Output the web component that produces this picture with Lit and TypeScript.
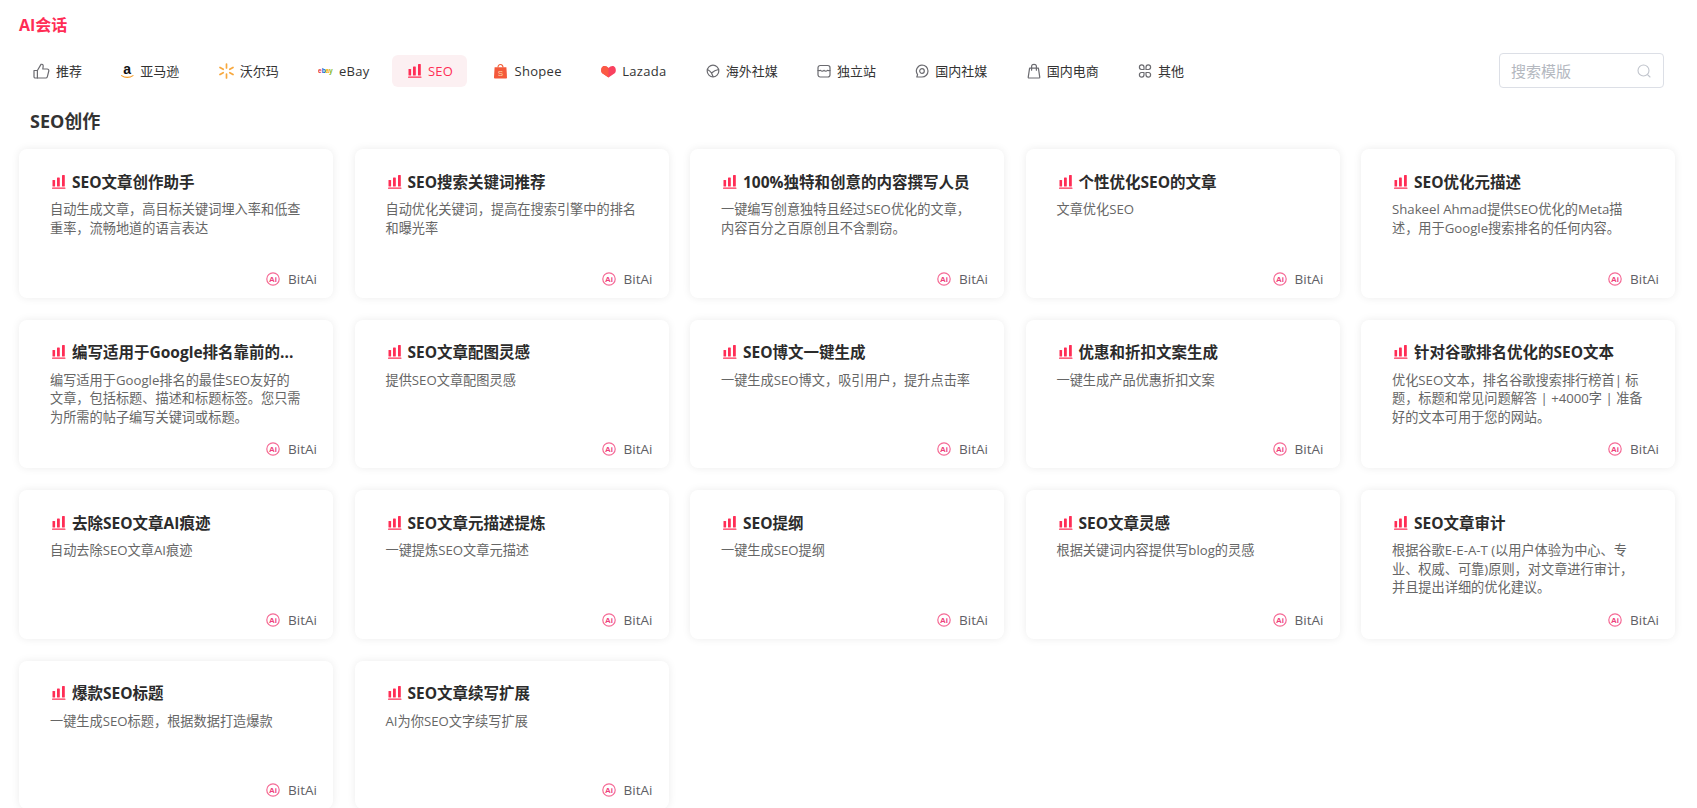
import { LitElement, html, css, svg } from "lit";
import { customElement } from "lit/decorators.js";

const stroke = (w: number, h: number, body: unknown) => html`<svg class="ic" width=${w} height="16" viewBox="0 0 ${w} 16" fill="none" stroke="#6b6b70" stroke-width="1.2" stroke-linecap="round" stroke-linejoin="round">${body}</svg>`;

const bars = (w = 14) => html`<svg class="ic" width=${w} height="15" viewBox="0 0 14 15" fill="#ff2d55">
  <rect x="0.5" y="6" width="2.6" height="6.5" rx="0.6"/><rect x="5" y="3.5" width="2.8" height="9" rx="0.6"/><rect x="10" y="1" width="2.8" height="11.5" rx="0.6"/><rect x="0" y="13.6" width="13.5" height="1.2" rx="0.6"/></svg>`;

const ICONS: Record<string, unknown> = {
  thumb: stroke(17, 16, svg`<path d="M1 7.5h3.4v7.5H2.2A1.2 1.2 0 0 1 1 13.8z"/><path d="M4.4 7.5 8 1.4c1.3-.5 2.3.4 2.2 1.7L9.8 6h4.4c1.1 0 1.9 1 1.6 2l-1.5 5.8c-.2.7-.8 1.2-1.5 1.2H4.4"/>`),
  amazon: html`<svg class="ic" width="13" height="20" viewBox="0 -2 13 20"><text x="6.2" y="10.5" text-anchor="middle" font-family="Liberation Sans" font-weight="700" font-size="14" fill="#111">a</text><path d="M0.6 12.6c3.2 2.4 8 2.4 11.4 0" fill="none" stroke="#f59a23" stroke-width="1.1" stroke-linecap="round"/></svg>`,
  walmart: html`<svg class="ic" width="15" height="16" viewBox="0 0 15 16" stroke="#f7a83e" stroke-width="1.7" stroke-linecap="round"><path d="M7.5 1v4M7.5 11v4M1 4.4l3.2 1.9M10.8 9.7 14 11.6M1 11.6l3.2-1.9M10.8 6.3 14 4.4"/></svg>`,
  ebay: html`<svg class="ic ebay" width="17" height="16" viewBox="0 0 17 16" font-family="Liberation Sans" font-size="6.6" font-weight="700"><text x="0" y="10" fill="#e53238">e</text><text x="3.7" y="10" fill="#0064d2">b</text><text x="7.4" y="10" fill="#f5af02">a</text><text x="11" y="10" fill="#86b817">y</text></svg>`,
  seo: bars(),
  shopee: html`<svg class="ic shopee" width="13" height="16" viewBox="0 0 13 16"><path d="M4 4.5C4 .4 9 .4 9 4.5" fill="none" stroke="#f0613a" stroke-width="1.1"/><path d="M.6 4.2h11.8l.6 10.2c0 .7-.5 1.1-1.1 1.1H1.1C.5 15.5 0 15.100 0 14.400z" fill="#f4593a"/><text x="6.500" y="13" text-anchor="middle" font-family="Liberation Sans" font-size="8" fill="#ffd9a8">S</text></svg>`,
  lazada: html`<svg class="ic" width="15" height="16" viewBox="0 0 15 16"><path d="M7.500 14.500 1.300 10.300C-.4 9 -.2 4.200 2.200 3.200c2-.8 3.700.4 5.300 1.700 1.600-1.300 3.300-2.500 5.300-1.700 2.400 1 2.600 5.800.9 7.100z" fill="#f9415f"/><path d="M7.500 4.900C5.900 3.600 4.200 2.400 2.200 3.200-.2 4.200-.4 9 1.300 10.300L7.500 14.500z" fill="#fb5a44"/></svg>`,
  global: stroke(14, 16, svg`<circle cx="7" cy="8" r="5.800"/><path d="M1.500 6.500c2 1 3 1.800 4 3.500 2-1.800 4-3 7-3.500M5.500 10c.5 1.200 1 2.400 1.500 3.600"/>`),
  store: stroke(14, 16, svg`<rect x="1" y="2.500" width="12" height="11.500" rx="2.200"/><path d="M1 7.500c1 .2 2 .2 2.500-.2C4.500 8.500 6 8.500 7 7.300c1 1.200 2.500 1.200 3.500 0 .5.400 1.500.4 2.500.2"/>`),
  social: stroke(14, 16, svg`<path d="M7 2a6 6 0 0 1 0 12H1.800l.8-2.400A6 6 0 0 1 7 2z"/><circle cx="7" cy="8" r="2.300"/>`),
  bag: stroke(14, 16, svg`<path d="M2.600 5.200h8.800l1.400 9.100c0 .4-.3.700-.7.700H1.900c-.4 0-.7-.3-.7-.7z"/><path d="M4.600 7.200V3.400C4.600.6 9.400.6 9.400 3.400v3.800"/>`),
  grid: stroke(14, 16, svg`<path d="M6 6.500H3.500A2.300 2.300 0 1 1 6 4.200zM8 6.500h2.500A2.300 2.300 0 1 0 8 4.200zM6 9.500H3.500A2.300 2.300 0 1 0 6 11.800zM8 9.500h2.500A2.300 2.300 0 1 1 8 11.800z"/>`),
};

const TABS = [
  ["thumb", "推荐"], ["amazon", "亚马逊"], ["walmart", "沃尔玛"], ["ebay", "eBay"], ["seo", "SEO"], ["shopee", "Shopee"],
  ["lazada", "Lazada"], ["global", "海外社媒"], ["store", "独立站"], ["social", "国内社媒"], ["bag", "国内电商"], ["grid", "其他"],
];

const CARDS = [
  ["SEO文章创作助手", "自动生成文章，高目标关键词埋入率和低查重率，流畅地道的语言表达"],
  ["SEO搜索关键词推荐", "自动优化关键词，提高在搜索引擎中的排名和曝光率"],
  ["100%独特和创意的内容撰写人员", "一键编写创意独特且经过SEO优化的文章，内容百分之百原创且不含剽窃。"],
  ["个性优化SEO的文章", "文章优化SEO"],
  ["SEO优化元描述", "Shakeel Ahmad提供SEO优化的Meta描述，用于Google搜索排名的任何内容。"],
  ["编写适用于Google排名靠前的...", "编写适用于Google排名的最佳SEO友好的文章，包括标题、描述和标题标签。您只需为所需的帖子编写关键词或标题。"],
  ["SEO文章配图灵感", "提供SEO文章配图灵感"],
  ["SEO博文一键生成", "一键生成SEO博文，吸引用户，提升点击率"],
  ["优惠和折扣文案生成", "一键生成产品优惠折扣文案"],
  ["针对谷歌排名优化的SEO文本", "优化SEO文本，排名谷歌搜索排行榜首| 标题，标题和常见问题解答 | +4000字 | 准备好的文本可用于您的网站。"],
  ["去除SEO文章AI痕迹", "自动去除SEO文章AI痕迹"],
  ["SEO文章元描述提炼", "一键提炼SEO文章元描述"],
  ["SEO提纲", "一键生成SEO提纲"],
  ["SEO文章灵感", "根据关键词内容提供写blog的灵感"],
  ["SEO文章审计", "根据谷歌E-E-A-T (以用户体验为中心、专业、权威、可靠)原则，对文章进行审计，并且提出详细的优化建议。"],
  ["爆款SEO标题", "一键生成SEO标题，根据数据打造爆款"],
  ["SEO文章续写扩展", "AI为你SEO文字续写扩展"],
];

const aiBadge = html`<svg class="ai" width="14" height="14" viewBox="0 0 14 14"><circle cx="7" cy="7" r="6.200" fill="#fff" stroke="#f56a96" stroke-width="1.200"/><text x="7" y="9.900" text-anchor="middle" font-family="Liberation Sans" font-size="8" font-weight="700" fill="#ee3f7c">Ai</text></svg>`;

@customElement("app-root")
export class AppRoot extends LitElement {
  static styles = css`
    :host {
      display: block;
      height: 808px;
      overflow: hidden;
      background: #fff;
      font-family: "Open Sans", "Noto Sans CJK SC", sans-serif;
      color: #333;
    }
    .brand {
      padding: 15px 0 0 19px;
      font-size: 16px;
      line-height: 20px;
      font-weight: 700;
      color: #ff2d55;
    }
    .toolbar {
      display: flex;
      align-items: center;
      padding: 18px 33px 0 18px;
      justify-content: space-between;
    }
    .tabs { display: flex; gap: 9.300px; }
    .tab {
      display: flex;
      align-items: center;
      height: 32px;
      padding: 0 15px;
      border-radius: 6px;
      font-size: 13px;
      color: #333;
      white-space: nowrap;
    }
    .tab.latin { letter-spacing: 0.3px; }
    .tab.active {
      margin: 0 2px 0 -2px;
      padding: 0 14px 0 16px;
      background: #fcf0f2;
      color: #ff2d55;
    }
    .ic { flex: none; margin-right: 6px; }
    .ic.ebay { margin-right: 4px; }
    .ic.shopee { margin-right: 8px; }
    .search {
      display: flex;
      align-items: center;
      justify-content: space-between;
      box-sizing: border-box;
      width: 165px;
      height: 35px;
      padding: 0 12px 0 11px;
      border: 1px solid #dcdfe6;
      border-radius: 4px;
      font-size: 15px;
      color: #b4b8bf;
    }
    h2 {
      margin: 0;
      padding: 19.500px 0 0 30px;
      font-size: 18px;
      line-height: 26px;
      font-weight: 700;
      color: #333;
    }
    .grid {
      display: grid;
      grid-template-columns: repeat(5, 314px);
      column-gap: 21.5px;
      row-gap: 22px;
      padding: 15.500px 0 0 19px;
    }
    .card {
      display: flex;
      flex-direction: column;
      box-sizing: border-box;
      height: 148.500px;
      padding: 22px 16px 9px 31px;
      background: #fff;
      border-radius: 8px;
      box-shadow: 0 0 8px rgba(0, 0, 0, 0.08);
    }
    .title {
      display: flex;
      align-items: center;
      height: 20px;
      padding-left: 2px;
      margin-bottom: 9px;
      font-size: 15.500px;
      font-weight: 700;
      color: #2b2b2b;
      white-space: nowrap;
    }
    .desc {
      width: 252px;
      font-size: 13.200px;
      line-height: 18.500px;
      color: #666;
    }
    .foot {
      display: flex;
      align-items: center;
      justify-content: flex-end;
      margin-top: auto;
      font-size: 13.500px;
      line-height: 20px;
      color: #5f5f66;
    }
    .ai { margin-right: 8px; }
  `;

  render() {
    return html`
      <div class="brand">AI会话</div>
      <div class="toolbar">
        <div class="tabs">
          ${TABS.map(([icon, label]) => html`<div class="tab ${icon === "seo" ? "active" : ""} ${/^[A-Za-z]+$/.test(label) ? "latin" : ""}">${ICONS[icon]}${label}</div>`)}
        </div>
        <div class="search">
          <span>搜索模版</span>
          <svg width="14" height="14" viewBox="0 0 14 14" fill="none" stroke="#c0c4cc" stroke-width="1.100" stroke-linecap="round"><circle cx="6.500" cy="6.500" r="5.500"/><path d="M10.800 10.800 13 13"/></svg>
        </div>
      </div>
      <h2>SEO创作</h2>
      <div class="grid">
        ${CARDS.map(([t, d]) => html`
          <div class="card">
            <div class="title">${bars()}<span>${t}</span></div>
            <div class="desc">${d}</div>
            <div class="foot">${aiBadge}BitAi</div>
          </div>`)}
      </div>
    `;
  }
}
